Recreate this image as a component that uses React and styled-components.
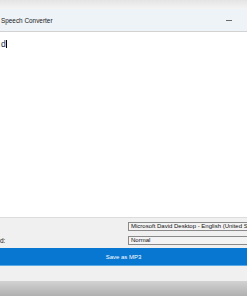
import React from "react";
import styled, { createGlobalStyle } from "styled-components";

const Global = createGlobalStyle`
  html, body {
    margin: 0;
    padding: 0;
    width: 247px;
    height: 296px;
    overflow: hidden;
    background: #b4b4b4;
    font-family: "Liberation Sans", "DejaVu Sans", sans-serif;
  }
`;

const Screen = styled.div`
  width: 247px;
  height: 296px;
  display: flex;
  flex-direction: column;
`;

const Window = styled.div`
  height: 281px;
  display: flex;
  flex-direction: column;
  background: #f0f0f0;
`;

const TopStrip = styled.div`
  height: 9px;
  background: linear-gradient(#e4e4e4, #f4f4f4);
`;

const TitleBar = styled.div`
  height: 22px;
  background: #eef3f8;
  border-bottom: 1px solid #d2d2d2;
  display: flex;
  align-items: center;
  justify-content: space-between;
  padding: 0 15px 0 1px;
  font-size: 6.4px;
  color: #1a1a1a;
`;

const Minimize = styled.span`
  width: 6px;
  height: 1px;
  background: #6a6a6a;
`;

const Editor = styled.div`
  flex: 1;
  background: #ffffff;
  border-bottom: 1px solid #dcdcdc;
  padding: 7px 1px;
  font-size: 8.5px;
  color: #1c1c4a;
`;

const Caret = styled.span`
  display: inline-block;
  width: 1px;
  height: 8px;
  margin-left: 0;
  vertical-align: -1px;
  background: #000;
`;

const Panel = styled.div`
  display: flex;
  flex-direction: column;
  padding: 4px 0 15px;
`;

const Row = styled.div`
  height: 9px;
  display: flex;
  align-items: center;
  justify-content: space-between;
  margin-bottom: ${(p) => p.$gap || 4}px;
  font-size: 6.5px;
  color: #222;
`;

const Field = styled.div`
  width: 119px;
  height: 9px;
  box-sizing: border-box;
  border: 1px solid #8a8a8a;
  border-right: none;
  background: #f3f3f3;
  font-size: 6px;
  line-height: 7px;
  padding-left: 2px;
  white-space: nowrap;
  overflow: hidden;
  color: #111;
`;

const SaveButton = styled.div`
  height: 17px;
  background: #0877d2;
  border-bottom: 1px solid #5aa8e6;
  display: flex;
  align-items: center;
  justify-content: center;
  font-size: 6px;
  color: #ffffff;
`;

const Shadow = styled.div`
  flex: 1;
  background: linear-gradient(#d2d2d2, #b0b0b0);
`;

export default function App() {
  return (
    <Screen>
      <Global />
      <Window>
        <TopStrip />
        <TitleBar>
          <span>Speech Converter</span>
          <Minimize />
        </TitleBar>
        <Editor>
          d<Caret />
        </Editor>
        <Panel>
          <Row $gap={5}>
            <span />
            <Field>Microsoft David Desktop - English (United States)</Field>
          </Row>
          <Row $gap={3}>
            <span>d:</span>
            <Field>Normal</Field>
          </Row>
          <SaveButton>Save as MP3</SaveButton>
        </Panel>
      </Window>
      <Shadow />
    </Screen>
  );
}
